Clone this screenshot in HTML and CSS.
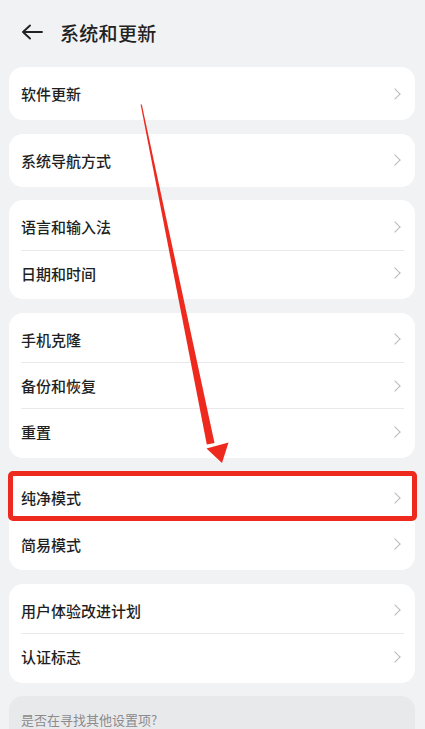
FILE: index.html
```html
<!DOCTYPE html>
<html lang="zh">
<head>
<meta charset="utf-8">
<link rel="stylesheet" href="styles.css">
</head>
<body>
<div class="page">
  <header class="header">
    <svg class="back" width="22" height="16" viewBox="0 0 22 16"><path d="M9 1.5 L2 8 L9 14.5 M2 8 H21" fill="none" stroke="#222" stroke-width="1.9" stroke-linecap="round" stroke-linejoin="round"/></svg>
    <h1 class="title">系统和更新</h1>
  </header>
  <main class="list">
    <section class="card">
      <div class="row"><span>软件更新</span><i class="chev"></i></div>
    </section>
    <section class="card">
      <div class="row"><span>系统导航方式</span><i class="chev"></i></div>
    </section>
    <section class="card">
      <div class="row"><span>语言和输入法</span><i class="chev"></i></div>
      <div class="row"><span>日期和时间</span><i class="chev"></i></div>
    </section>
    <section class="card">
      <div class="row"><span>手机克隆</span><i class="chev"></i></div>
      <div class="row"><span>备份和恢复</span><i class="chev"></i></div>
      <div class="row"><span>重置</span><i class="chev"></i></div>
    </section>
    <section class="card">
      <div class="row"><span>纯净模式</span><i class="chev"></i></div>
      <div class="row nosep"><span>简易模式</span><i class="chev"></i></div>
    </section>
    <section class="card">
      <div class="row"><span>用户体验改进计划</span><i class="chev"></i></div>
      <div class="row"><span>认证标志</span><i class="chev"></i></div>
    </section>
    <section class="card hint">
      <p class="hint-text">是否在寻找其他设置项?</p>
    </section>
  </main>
  <div class="highlight"></div>
  <svg class="arrow" width="425" height="729" viewBox="0 0 425 729">
    <polygon points="140.6,104.5 141.8,104.5 214.5,443 206.8,444.5" fill="#ee2a1f"/>
    <polygon points="206.5,448.5 228.5,442.5 222,463" fill="#ee2a1f"/>
  </svg>
</div>
</body>
</html>
```
FILE: styles.css
```css
* { box-sizing: border-box; }
html, body { margin: 0; padding: 0; }
body {
  background: #f1f2f4;
  font-family: "Noto Sans CJK SC", "Noto Sans", sans-serif;
  color: #1e1e1e;
  width: 425px;
  height: 729px;
  overflow: hidden;
}
.page {
  position: relative;
  padding: 0 10px 0 9px;
}
.header {
  height: 64px;
  display: flex;
  align-items: center;
  padding-left: 12px;
}
.back { margin-right: 17px; display: block; }
.title {
  margin: 0;
  font-size: 19px;
  font-weight: 500;
  color: #222;
  letter-spacing: 0.3px;
}
.list {
  padding-top: 3px;
  display: flex;
  flex-direction: column;
  gap: 13.5px;
}
.card {
  background: #fff;
  border-radius: 14px;
  padding: 3.5px 0;
}
.row {
  height: 46px;
  margin: 0 11px 0 12px;
  display: flex;
  align-items: center;
  justify-content: space-between;
  font-size: 15px;
  font-weight: 500;
  color: #1f1f1f;
  padding-right: 3px;
}
.row + .row { border-top: 1px solid #e9e9eb; }
.row.nosep { border-top-color: transparent; }
.chev {
  width: 8px;
  height: 8px;
  border-top: 1.3px solid #b9b9bb;
  border-right: 1.3px solid #b9b9bb;
  transform: rotate(45deg);
  margin-right: 2px;
}
.hint {
  background: #e8e9eb;
  height: 60px;
  padding: 14px 12px;
}
.hint-text {
  margin: 0;
  font-size: 13px;
  color: #8b8b8d;
}
.highlight {
  position: absolute;
  left: 8px;
  top: 471px;
  width: 409px;
  height: 50px;
  border: 5px solid #ee2a1f;
  border-radius: 5px;
}
.arrow {
  position: absolute;
  left: 0;
  top: 0;
  pointer-events: none;
}
```
